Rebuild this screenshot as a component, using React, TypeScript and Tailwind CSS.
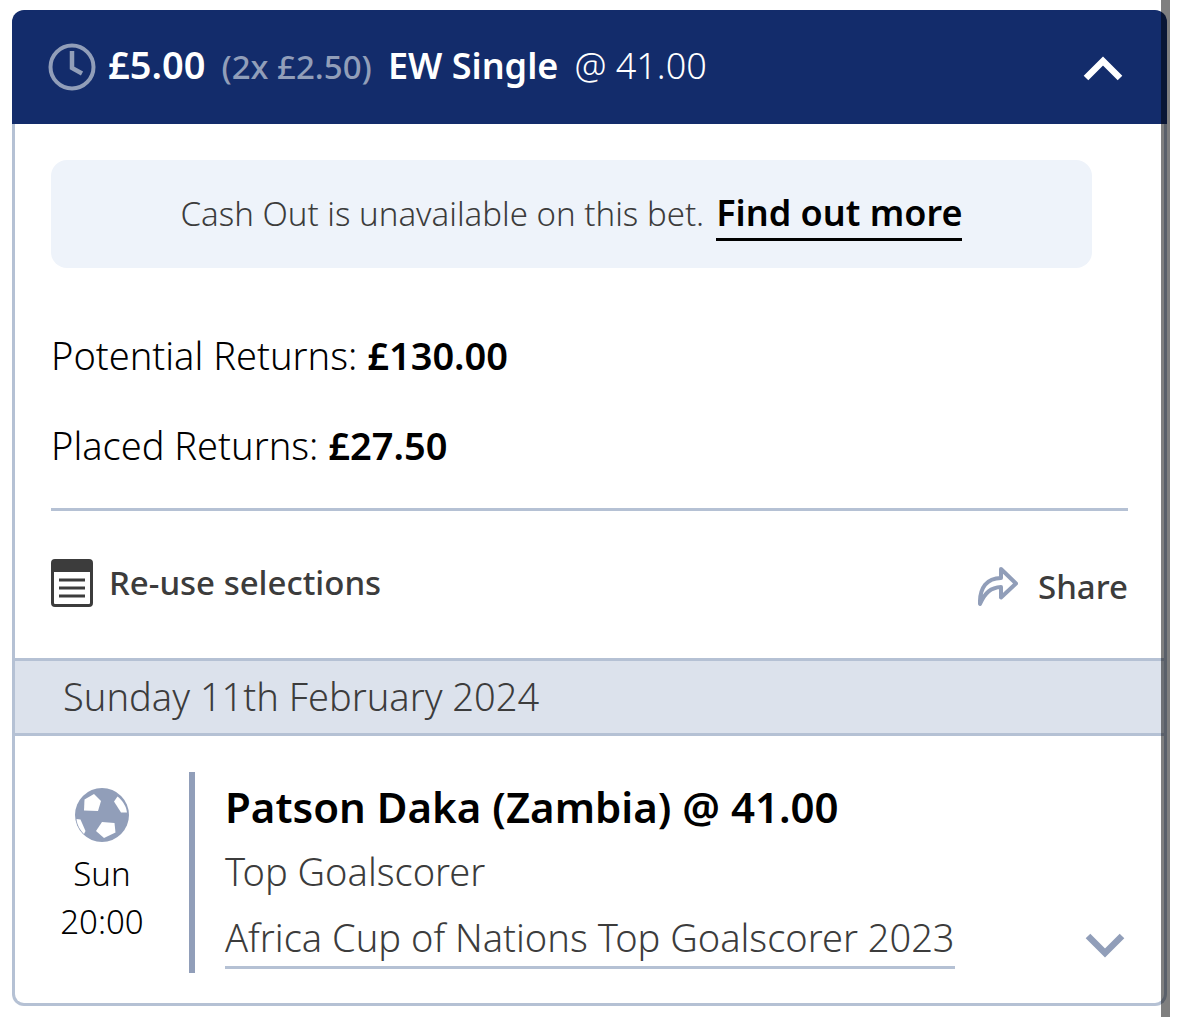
import { useState } from 'react';
import type { ReactNode } from 'react';

function ClockIcon() {
  return (
    <svg className="size-12 shrink-0 text-[#919eb9]" viewBox="0 0 48 48" fill="none" stroke="currentColor" aria-hidden="true">
      <circle cx="24" cy="24" r="21.5" strokeWidth="4" />
      <path d="M24 8v17l10 5.500" strokeWidth="4.500" />
    </svg>
  );
}

function Chevron({ className }: { className: string }) {
  return (
    <svg className={className} viewBox="0 0 40 28" fill="none" stroke="currentColor" strokeLinejoin="miter" aria-hidden="true">
      <path d="M3 25 20 8l17 17" strokeWidth="6.500" />
    </svg>
  );
}

function SlipIcon() {
  return (
    <svg className="h-12 w-[42px] shrink-0" viewBox="0 0 42 48" fill="none" stroke="currentColor" aria-hidden="true">
      <rect x="1.500" y="1.500" width="39" height="45" rx="2.500" strokeWidth="3" />
      <path d="M2 2h38v11H2z" fill="currentColor" stroke="none" />
      <path d="M8 21h26M8 29h26M8 37h26" strokeWidth="3" />
    </svg>
  );
}

function ShareIcon() {
  return (
    <svg className="h-10 w-10 shrink-0 text-[#919eb9]" viewBox="0 0 40 40" fill="none" stroke="currentColor" strokeWidth="4" strokeLinejoin="round" aria-hidden="true">
      <path d="M23 2l15 14.500L23 30.500V20C13 20.500 7 25.500 2 37 1.500 20.500 9 11 23 11z" />
    </svg>
  );
}

function BallIcon() {
  return (
    <svg className="size-[54px]" viewBox="0 0 54 54" aria-hidden="true">
      <circle cx="27" cy="27" r="27" fill="#919eb9" />
      <g fill="#fff">
        <path d="M19 6l7 7-3 10-14-.500.500-11z" />
        <path d="M27 34l12.500 1 1 9.500-11.500 5.500-8-7z" />
        <path d="M42.500 8.500c5 4 8.500 9 9.500 16h-6l-7-11z" />
        <path d="M1.500 31l4 .500 5 11.500-1.500 3C5 42 2 37 1.500 31z" />
      </g>
    </svg>
  );
}

function ReturnsRow({ label, children }: { label: string; children: ReactNode }) {
  return (
    <p className="text-[38px] leading-[50px] font-light">
      {label} <span className="font-semibold">{children}</span>
    </p>
  );
}

export default function App() {
  const [open, setOpen] = useState(true);

  return (
    <main className="relative bg-white px-3 pt-2.5 pb-[11px] font-['Noto_Sans',sans-serif] text-black">
      <article>
        {/* Bet header */}
        <h2>
          <button
            type="button"
            aria-expanded={open}
            aria-label="Toggle bet details"
            onClick={() => setOpen(!open)}
            className="flex h-[114px] w-full items-center gap-3 rounded-t-xl bg-[#132c6b] pr-11 pl-9 text-left text-white"
          >
            <ClockIcon />
            <span className="flex flex-1 items-baseline gap-4 pb-1 text-[36px] leading-[50px]">
              <span className="text-[38px] font-semibold">£5.00</span>
              <span className="text-[33px] font-medium text-[#919eb9]">(2x £2.50)</span>
              <span className="font-semibold">EW Single</span>
              <span className="font-light">@ 41.00</span>
            </span>
            <Chevron className="h-7 w-10" />
          </button>
        </h2>

        {open && (
          <div className="rounded-b-xl border-x-[3px] border-b-[3px] border-[#b5c1d4]">
            <div className="px-9 pt-9">
              <div className="mr-9 flex h-[108px] items-center justify-center gap-3 rounded-2xl bg-[#eef3fa] text-[33px] leading-[50px]">
                <span className="font-light text-[#3c3c3c]">Cash Out is unavailable on this bet.</span>
                <a href="#cash-out" className="border-b-[3px] border-black text-[36px] font-semibold">
                  Find out more
                </a>
              </div>

              <div className="mt-[62px] flex flex-col gap-10 border-b-[3px] border-[#b5c1d4] pb-[38px]">
                <ReturnsRow label="Potential Returns:">£130.00</ReturnsRow>
                <ReturnsRow label="Placed Returns:">£27.50</ReturnsRow>
              </div>

              <div className="flex items-start justify-between pt-[47px] pb-[46px] text-[33px] leading-[50px] font-medium text-[#3c3c3c]">
                <button type="button" className="flex items-center gap-4">
                  <SlipIcon />
                  Re-use selections
                </button>
                <button type="button" className="flex items-center gap-5 pt-1">
                  <ShareIcon />
                  Share
                </button>
              </div>
            </div>

            <h3 className="border-y-[3px] border-[#b5c1d4] bg-[#dce2ec] px-12 pt-2.5 pb-3 text-[38px] leading-[50px] font-light text-[#3c3c3c]">
              Sunday 11th February 2024
            </h3>

            {/* Selection */}
            <section className="flex pt-9 pr-[39px] pb-[30px]">
              <div className="flex w-[174px] flex-col items-center pt-4 text-[33px] leading-[48px] font-light">
                <BallIcon />
                <span className="mt-2">Sun</span>
                <time dateTime="2024-02-11T20:00">20:00</time>
              </div>
              <div className="flex flex-1 items-end justify-between border-l-[6px] border-[#919eb9] pb-1 pl-[30px]">
                <div className="text-[38px] leading-[50px] font-light text-[#3c3c3c]">
                  <h4 className="mb-1 text-[42px] leading-[70px] font-semibold text-black">Patson Daka (Zambia) @ 41.00</h4>
                  <p className="mb-4">Top Goalscorer</p>
                  <a href="#event" className="inline-block border-b-[3px] border-[#b5c1d4] pb-1">
                    Africa Cup of Nations Top Goalscorer 2023
                  </a>
                </div>
                <button type="button" aria-label="Show event details" className="mb-2 text-[#919eb9]">
                  <Chevron className="h-7 w-10 rotate-180" />
                </button>
              </div>
            </section>
          </div>
        )}
      </article>

      {/* Scroll track */}
      <div className="absolute inset-y-0 right-[9px] w-[9px] bg-black/50" />
    </main>
  );
}
